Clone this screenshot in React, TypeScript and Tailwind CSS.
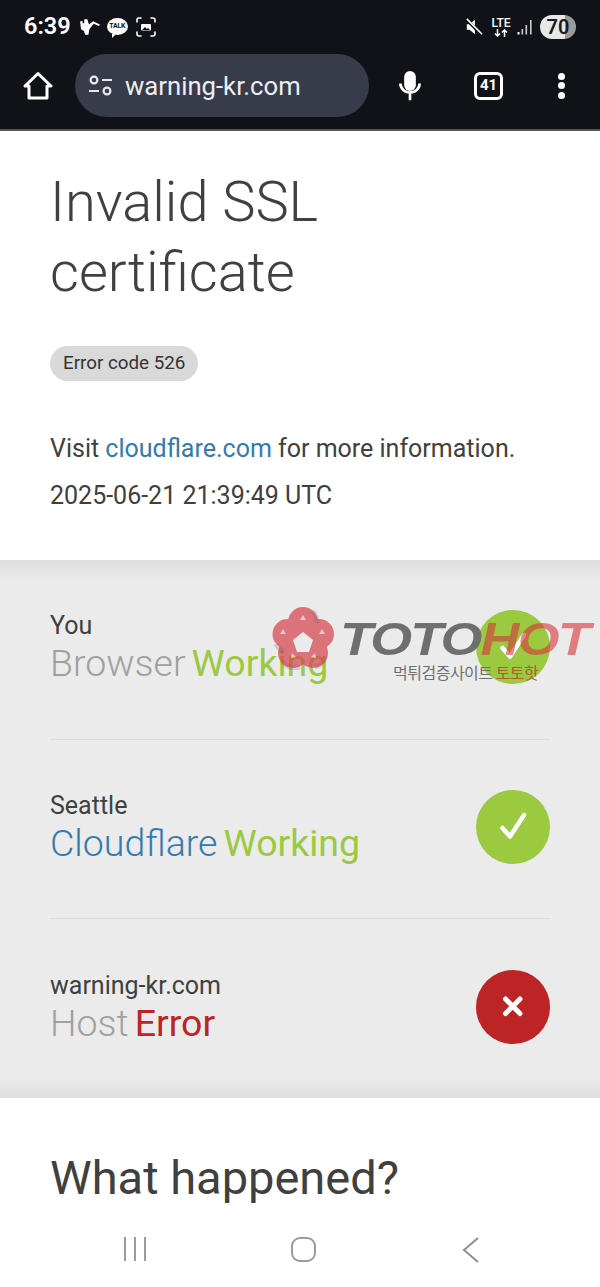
import React from "react";

const Check = () => (
  <svg viewBox="0 0 74 74" className="h-[74px] w-[74px]">
    <path d="M26.500 38 L34 46.500 L48 25" fill="none" stroke="#fff" strokeWidth="4.500" strokeLinecap="round" strokeLinejoin="round" />
  </svg>
);

const Cross = () => (
  <svg viewBox="0 0 74 74" className="h-[74px] w-[74px]">
    <path d="M29.500 29 L44 43.500 M44 29 L29.500 43.500" fill="none" stroke="#fff" strokeWidth="5" strokeLinecap="round" />
  </svg>
);

function StatusRow({
  top,
  name,
  nameColor,
  state,
  stateColor,
  bg,
  border,
  icon,
}: {
  top: string;
  name: string;
  nameColor: string;
  state: string;
  stateColor: string;
  bg: string;
  border?: boolean;
  icon: React.ReactNode;
}) {
  return (
    <div className={`flex h-[179.5px] items-center justify-between ${border ? "border-b border-[#dcdcdc] pb-[4px]" : "pb-[3px]"}`}>
      <div className="flex flex-col pt-[2px]">
        <div className="text-[25px] leading-[30px] text-[#404040]">{top}</div>
        <div className="flex gap-[6px] text-[37.500px] leading-[44px]">
          <span className={`font-light ${nameColor}`}>{name}</span>
          <span className={stateColor}>{state}</span>
        </div>
      </div>
      <div className={`flex h-[74px] w-[74px] items-center justify-center rounded-full ${bg}`}>{icon}</div>
    </div>
  );
}

export default function App() {
  return (
    <div className="relative flex h-[1287px] w-[600px] flex-col overflow-hidden bg-white [font-family:Roboto,sans-serif]">
      {/* Browser chrome */}
      <div className="h-[131px] shrink-0 border-b-2 border-[#55565a] bg-[#111218] text-white">
        <div className="flex h-[54px] items-center justify-between pl-[24px] pr-[24px]">
          <div className="flex items-center gap-[8px]">
            <span className="text-[23.500px] font-semibold leading-none">6:39</span>
            <svg viewBox="0 0 21 15" className="h-[16px] w-[22px]" fill="#fff">
              <path d="M1 2h2.500v2H5V0h3l1.500 5 4-3 6.500 3-1 1.500-5-2-4 5-1 5.500H6L4.500 11 2 10z" />
            </svg>
            <div className="relative -ml-[2px] -mt-[1px] flex h-[17px] w-[21px] items-center justify-center rounded-[50%] bg-white">
              <span className="text-[7px] font-bold leading-none tracking-[-0.3px] text-[#111218]">TALK</span>
              <span className="absolute -bottom-[3px] left-[5px] h-0 w-0 border-r-[4px] border-t-[4px] border-r-transparent border-t-white" />
            </div>
            <svg viewBox="0 0 20 20" className="h-[20px] w-[20px]" fill="none" stroke="#fff" strokeWidth="1.600" strokeLinecap="round">
              <path d="M1 5V3a2 2 0 0 1 2-2h2M15 1h2a2 2 0 0 1 2 2v2M19 15v2a2 2 0 0 1-2 2h-2M5 19H3a2 2 0 0 1-2-2v-2" />
              <rect x="5" y="7" width="10" height="6.500" rx="1" fill="#fff" stroke="none" />
              <path d="M6 13l3-3 2 2 1-1 2 2z" fill="#111218" stroke="none" />
            </svg>
          </div>
          <div className="flex items-center">
            <svg viewBox="0 0 20 20" className="mr-[8px] h-[18px] w-[18px]" fill="#fff">
              <path d="M2 7h3l6-5v16l-6-5H2z" />
              <path d="M1 1l18 18" stroke="#111218" strokeWidth="3.500" />
              <path d="M2 1l17 17" stroke="#fff" strokeWidth="1.800" />
            </svg>
            <div className="mr-[6px] flex w-[20px] flex-col items-center">
              <span className="text-[12px] font-medium leading-[11px]">LTE</span>
              <svg viewBox="0 0 14 8" className="h-[8px] w-[14px]" fill="none" stroke="#fff" strokeWidth="1.500">
                <path d="M3.500 0v7M1 4.500l2.500 2.500 2.500-2.500M10.500 8V1M8 3.500l2.500-2.500 2.500 2.500" />
              </svg>
            </div>
            <svg viewBox="0 0 16 16" className="mr-[7px] h-[18px] w-[16px]" fill="#fff">
              <rect x="0.500" y="13" width="2" height="2.500" />
              <rect x="4.500" y="10" width="1.600" height="5.500" fill="#ccc" />
              <rect x="8.500" y="6" width="1.600" height="9.500" fill="#ccc" />
              <rect x="13" y="1" width="1.600" height="14.500" fill="#ccc" />
            </svg>
            <div className="flex h-[24px] w-[36px] items-center justify-center rounded-full bg-[linear-gradient(90deg,#e8e8e8_0_69%,#9a9a9a_69%_100%)]">
              <span className="text-[20px] font-semibold leading-none text-[#1a1a1f]">70</span>
            </div>
          </div>
        </div>
        <div className="flex h-[63px] items-center">
          <div className="flex w-[75px] justify-center">
            <svg viewBox="0 0 30 30" className="h-[30px] w-[30px]" fill="none" stroke="#fff" strokeWidth="3" strokeLinejoin="round">
              <path d="M15 2.500 L28 15 H24 V27 H6 V15 H2 Z" />
            </svg>
          </div>
          <div className="flex h-[63px] w-[294px] items-center rounded-full bg-[#383b4a] pl-[13px]">
            <svg viewBox="0 0 26 26" className="h-[26px] w-[26px]" fill="none" stroke="#e8e8ec" strokeWidth="2.200">
              <circle cx="6" cy="7" r="3.400" />
              <path d="M14 7h10M1 18h10" />
              <circle cx="19" cy="18" r="3.400" />
            </svg>
            <span className="ml-[11px] mt-[2px] text-[25.700px] leading-none text-[#eceef2]">warning-kr.com</span>
          </div>
          <div className="ml-[26px] flex w-[29px] justify-center">
            <svg viewBox="0 0 28 36" className="h-[30px] w-[24px]" fill="none" stroke="#fff" strokeWidth="3.200">
              <rect x="7" y="0" width="14" height="24" rx="7" fill="#fff" stroke="none" />
              <path d="M2.500 15a11.500 11 0 0 0 23 0M14 27v8" />
            </svg>
          </div>
          <div className="ml-[50px] flex h-[28px] w-[29px] items-center justify-center rounded-[6px] border-[3px] border-white">
            <span className="text-[15px] font-bold leading-none">41</span>
          </div>
          <div className="ml-[55px] flex w-[8px] flex-col gap-[2.500px]">
            <span className="h-[7px] w-[7px] rounded-full bg-white" />
            <span className="h-[7px] w-[7px] rounded-full bg-white" />
            <span className="h-[7px] w-[7px] rounded-full bg-white" />
          </div>
        </div>
      </div>

      {/* Page */}
      <div className="min-h-0 flex-1 overflow-hidden">
        <div className="h-[429px] px-[50px] pt-[36px]">
          <h1 className="text-[56px] font-light leading-[70px] text-[#404040]">
            Invalid SSL
            <br />
            certificate
          </h1>
          <div className="mt-[39px] inline-flex h-[35px] items-center rounded-full bg-[#d9d9d9] px-[13px] text-[18.800px] text-[#333333]">
            Error code 526
          </div>
          <p className="mt-[50px] text-[25px] leading-[36px] text-[#404040]">
            Visit <span className="text-[#337ab0]">cloudflare.com</span> for more information.
          </p>
          <p className="mt-[11px] text-[25px] leading-[36px] text-[#404040]">2025-06-21 21:39:49 UTC</p>
        </div>

        <div className="h-[538px] bg-[linear-gradient(180deg,#dedede_0,#ebebeb_22px,#ebebeb_518px,#dedede_100%)] px-[50px]">
          <StatusRow top="You" name="Browser" nameColor="text-[#a0a0a0]" state="Working" stateColor="text-[#9bc93f]" bg="bg-[#9bc93f]" border icon={<Check />} />
          <StatusRow top="Seattle" name="Cloudflare" nameColor="text-[#337ab0]" state="Working" stateColor="text-[#9bc93f]" bg="bg-[#9bc93f]" border icon={<Check />} />
          <StatusRow top="warning-kr.com" name="Host" nameColor="text-[#a0a0a0]" state="Error" stateColor="text-[#bd2426]" bg="bg-[#bd2426]" icon={<Cross />} />
        </div>

        <div className="px-[50px] pt-[50px]">
          <h2 className="text-[47px] font-normal leading-[60px] text-[#404040]">What happened?</h2>
        </div>
      </div>

      {/* Android navigation */}
      <div className="flex h-[76px] shrink-0 items-start bg-white pt-[26px]">
        <div className="flex w-[270px] justify-center">
          <div className="flex gap-[8px]">
            <span className="h-[24px] w-[2px] bg-[#9a9a9a]" />
            <span className="h-[24px] w-[2px] bg-[#9a9a9a]" />
            <span className="h-[24px] w-[2px] bg-[#9a9a9a]" />
          </div>
        </div>
        <div className="flex w-[66px] justify-center">
          <span className="h-[25px] w-[25px] rounded-[9px] border-[2px] border-[#9a9a9a]" />
        </div>
        <div className="ml-[113px] flex w-[44px] justify-center">
          <svg viewBox="0 0 18 26" className="h-[26px] w-[18px]" fill="none" stroke="#8f8f8f" strokeWidth="2">
            <path d="M16 1 L2 13 L16 25" />
          </svg>
        </div>
      </div>

      {/* Watermark */}
      <div className="pointer-events-none absolute left-[272px] top-[606px] h-[80px] w-[328px]">
        <svg viewBox="0 0 64 64" className="absolute left-0 top-0 h-[64px] w-[64px]">
          <g opacity="0.72" fill="#d8454f">
            <circle cx="31" cy="16" r="15" />
            <circle cx="15.500" cy="28" r="15" />
            <circle cx="47" cy="28" r="15" />
            <circle cx="21" cy="47" r="15" />
            <circle cx="41" cy="47" r="15" />
            <path d="M15 20H47V50H15z" />
          </g>
          <g fill="none" stroke="#7d5a60" strokeWidth="5" opacity="0.22">
            <path d="M40 5a15 15 0 0 1 5 12" />
            <path d="M4 38a15 15 0 0 0 7 7" />
            <path d="M10 55a15 15 0 0 0 18 6" />
            <path d="M52 54a15 15 0 0 1-9 7" />
          </g>
          <path d="M31 26 L41 34 L37 46 H25 L21 34 Z" fill="#ebebeb" />
          <path d="M31 9l3 5h-6zM50 23l3 5-6 0zM11 23l3 5-6 0zM20 47l4 4-5 1zM43 47l-4 4 5 1z" fill="#ebebeb" opacity="0.7" />
        </svg>
        <div className="absolute left-[68px] top-[8px] origin-left scale-x-[1.17] whitespace-nowrap text-[46px] font-bold italic leading-[50px] tracking-[-1.500px] [font-family:'Liberation_Sans',Arial,sans-serif]">
          <span className="text-[#6f6f6f]">TOTO</span>
          <span className="text-[#d8353d] opacity-60">HOT</span>
        </div>
        <div className="absolute left-[121px] top-[56px] whitespace-nowrap text-[16px] leading-[20px] tracking-[-0.500px] [font-family:'Noto_Sans_CJK_KR',sans-serif]">
          <span className="text-[#6f6f6f]">먹튀검증사이트 </span>
          <span className="text-[#b8562c]">토토핫</span>
        </div>
      </div>
    </div>
  );
}
